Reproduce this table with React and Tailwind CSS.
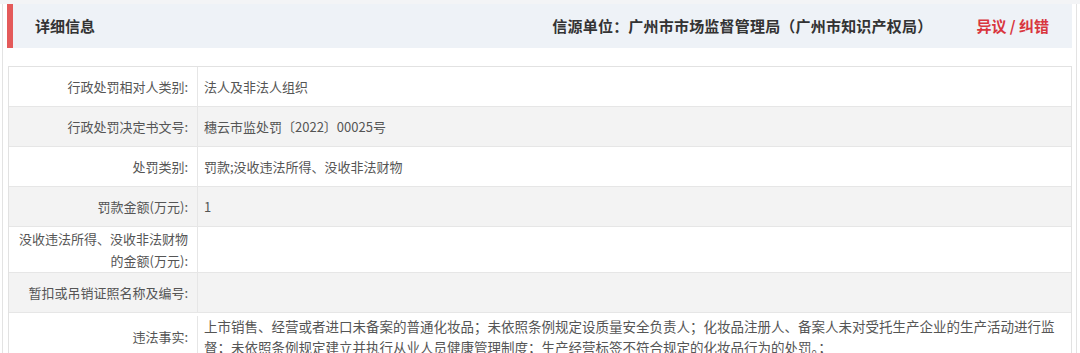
const rows = [
  { label: "行政处罚相对人类别:", value: "法人及非法人组织" },
  { label: "行政处罚决定书文号:", value: "穗云市监处罚〔2022〕00025号" },
  { label: "处罚类别:", value: "罚款;没收违法所得、没收非法财物" },
  { label: "罚款金额(万元):", value: "1" },
  { label: "没收违法所得、没收非法财物的金额(万元):", value: "", h: "h-[46px]" },
  { label: "暂扣或吊销证照名称及编号:", value: "" },
  {
    label: "违法事实:",
    value:
      "上市销售、经营或者进口未备案的普通化妆品；未依照条例规定设质量安全负责人；化妆品注册人、备案人未对受托生产企业的生产活动进行监督；未依照条例规定建立并执行从业人员健康管理制度；生产经营标签不符合规定的化妆品行为的处罚。；",
    h: "py-[3px]",
  },
];

export default function App() {
  return (
    <div
      className="w-[1080px] h-[353px] overflow-hidden bg-white"
      style={{ fontFamily: '"Noto Sans CJK SC", "Noto Sans", sans-serif' }}
    >
      <div className="h-[4px] bg-[#f3f4f6]" />
      <div className="ml-[2px] w-[1075px] border-x border-[#e3e3e3] px-[4px] h-[349px]">
        <div className="flex items-center h-[44px] bg-[#eef2f7] border-l-[6px] border-[#e45a5a]">
          <h2 className="ml-[22px] text-[15px] font-bold text-[#333]">详细信息</h2>
          <div className="ml-auto text-[15px] font-bold text-[#333] tracking-[0.2px]">
            信源单位：广州市市场监督管理局（广州市知识产权局）
          </div>
          <a className="ml-[44px] mr-[23px] text-[15px] font-bold text-[#d9363e]">异议 / 纠错</a>
        </div>
        <div className="mt-[18px] ml-[1px] border border-[#e2e2e2] text-[13px] text-[#555]">
          {rows.map((row, i) => (
            <div
              key={i}
              className={`flex items-stretch border-b border-[#e6e6e6] ${row.h || "h-[40px]"} ${i % 2 === 1 ? "bg-[#f3f3f3]" : "bg-white"}`}
            >
              <div className="w-[189px] shrink-0 flex items-center justify-end border-r border-[#e6e6e6] pl-[4px] pr-[9px] text-right leading-[22px]">
                <span>{row.label}</span>
              </div>
              <div
                className={`flex-1 flex items-center pl-[6px] ${
                  i === 6 ? "pr-[4px] text-[13.5px] leading-[21px]" : "pr-[8px] leading-[22px]"
                }`}
              >
                <span>{row.value}</span>
              </div>
            </div>
          ))}
        </div>
      </div>
    </div>
  );
}
